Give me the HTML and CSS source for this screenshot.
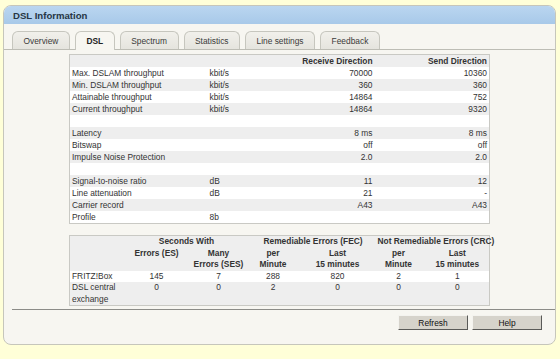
FILE: index.html
```html
<!DOCTYPE html>
<html lang="en">
<head>
  <meta charset="UTF-8" />
  <title>DSL Information</title>
  <link rel="stylesheet" href="styles.css">
</head>
<body>

  <!-- ===== Panel ===== -->
  <div class="panel">
    <div class="panel-head">DSL Information</div>

    <!-- Tabs -->
    <div class="tabs">
      <span class="tab">Overview</span>
      <span class="tab active">DSL</span>
      <span class="tab">Spectrum</span>
      <span class="tab">Statistics</span>
      <span class="tab">Line settings</span>
      <span class="tab">Feedback</span>
    </div>

    <div class="content">
      <!-- Line values -->
      <table class="data">
        <colgroup>
          <col style="width:138px"><col style="width:60px"><col style="width:107px"><col>
        </colgroup>
        <tr class="head"><td></td><td></td><th>Receive Direction</th><th>Send Direction</th></tr>
        <tr><td>Max. DSLAM throughput</td><td>kbit/s</td><td class="num">70000</td><td class="num">10360</td></tr>
        <tr><td>Min. DSLAM throughput</td><td>kbit/s</td><td class="num">360</td><td class="num">360</td></tr>
        <tr><td>Attainable throughput</td><td>kbit/s</td><td class="num">14864</td><td class="num">752</td></tr>
        <tr><td>Current throughput</td><td>kbit/s</td><td class="num">14864</td><td class="num">9320</td></tr>
        <tr><td>&nbsp;</td><td></td><td></td><td></td></tr>
        <tr><td>Latency</td><td></td><td class="num">8 ms</td><td class="num">8 ms</td></tr>
        <tr><td>Bitswap</td><td></td><td class="num">off</td><td class="num">off</td></tr>
        <tr><td>Impulse Noise Protection</td><td></td><td class="num">2.0</td><td class="num">2.0</td></tr>
        <tr><td>&nbsp;</td><td></td><td></td><td></td></tr>
        <tr><td>Signal-to-noise ratio</td><td>dB</td><td class="num">11</td><td class="num">12</td></tr>
        <tr><td>Line attenuation</td><td>dB</td><td class="num">21</td><td class="num">-</td></tr>
        <tr><td>Carrier record</td><td></td><td class="num">A43</td><td class="num">A43</td></tr>
        <tr><td>Profile</td><td>8b</td><td></td><td></td></tr>
      </table>

      <!-- Error counters -->
      <table class="errors">
        <colgroup>
          <col style="width:55px"><col style="width:64px"><col style="width:60px"><col style="width:49px">
          <col style="width:80px"><col style="width:42px"><col>
        </colgroup>
        <tr class="head group">
          <th></th>
          <th colspan="2">Seconds With</th>
          <th colspan="2">Remediable Errors (FEC)</th>
          <th colspan="2">Not Remediable Errors (CRC)</th>
        </tr>
        <tr class="head">
          <th></th>
          <th>Errors (ES)</th>
          <th>Many<br>Errors (SES)</th>
          <th>per<br>Minute</th>
          <th>Last<br>15 minutes</th>
          <th>per<br>Minute</th>
          <th class="last">Last<br>15 minutes</th>
        </tr>
        <tr>
          <td class="label">FRITZ!Box</td>
          <td>145</td><td>7</td><td>288</td><td>820</td><td>2</td><td class="last">1</td>
        </tr>
        <tr class="shade">
          <td class="label">DSL central exchange</td>
          <td>0</td><td>0</td><td>2</td><td>0</td><td>0</td><td class="last">0</td>
        </tr>
      </table>
    </div>

    <!-- Buttons -->
    <div class="actions">
      <button class="btn">Refresh</button>
      <button class="btn">Help</button>
    </div>
  </div>

</body>
</html>
```

FILE: styles.css
```css
body {
  margin: 0;
  padding: 5px 4px 14px 3px;
  background: #ffffd8;
  font-family: 'Liberation Sans', Arial, sans-serif;
  font-size: 8.4px;
  color: #333;
}

/* ===== Panel ===== */
.panel {
  background: #f7f6f1;
  border: 1px solid #c6c6bb;
  border-radius: 8px;
  overflow: hidden;
}
.panel-head {
  height: 18px;
  line-height: 19px;
  padding-left: 9px;
  background: linear-gradient(#bad6f0, #a8c9e9);
  color: #263645;
  font-size: 9.6px;
  font-weight: bold;
}

/* ===== Tabs ===== */
.tabs {
  display: flex;
  gap: 5px;
  padding: 7px 0 0 8px;
  border-bottom: 1px solid #bdbdb5;
}
.tab {
  height: 17px;
  line-height: 18px;
  padding: 0 10.5px;
  border: 1px solid #c6c6be;
  border-bottom: none;
  border-radius: 6px 6px 0 0;
  background: linear-gradient(#f1f0eb, #e5e4de);
  color: #3a3a3a;
}
.tab.active {
  height: 18px;
  margin-bottom: -1px;
  background: #f7f6f1;
  font-weight: bold;
  color: #222;
}

/* ===== Tables ===== */
.content { padding-top: 4px; }
.data,
.errors {
  width: 421px;
  margin: 0 auto;
  border-collapse: collapse;
  border: 1px solid #c9c9c4;
  background: #fff;
  table-layout: fixed;
}
.data td,
.data th {
  height: 12px;
  padding: 0 2px;
  line-height: 12px;
  text-align: left;
  white-space: nowrap;
}
.data th { text-align: right; font-weight: bold; }
.data tr:nth-child(odd) { background: #eeeeee; }
.data .num { text-align: right; }

.errors { margin-top: 11px; }
.errors th,
.errors td {
  padding: 0 2px;
  line-height: 11.5px;
  text-align: center;
  vertical-align: top;
}
.errors .head { background: #eeeeee; }
.errors .group th { white-space: nowrap; padding: 0; }
.errors th { font-weight: bold; }
.errors .label { text-align: left; }
.errors .last { padding-left: 8px; }
.errors .shade { background: #eeeeee; }

/* ===== Buttons ===== */
.actions {
  display: flex;
  justify-content: flex-end;
  gap: 4px;
  margin: 3px 0 0 8px;
  padding: 5px 13px 14px 0;
  border-top: 1px solid #8c8c88;
}
.btn {
  width: 70px;
  height: 15px;
  padding: 0;
  background: #d6d3cb;
  border: 1px solid;
  border-color: #f4f3ef #5a5a58 #5a5a58 #f4f3ef;
  font-family: inherit;
  font-size: 8.4px;
  color: #111;
}
```
